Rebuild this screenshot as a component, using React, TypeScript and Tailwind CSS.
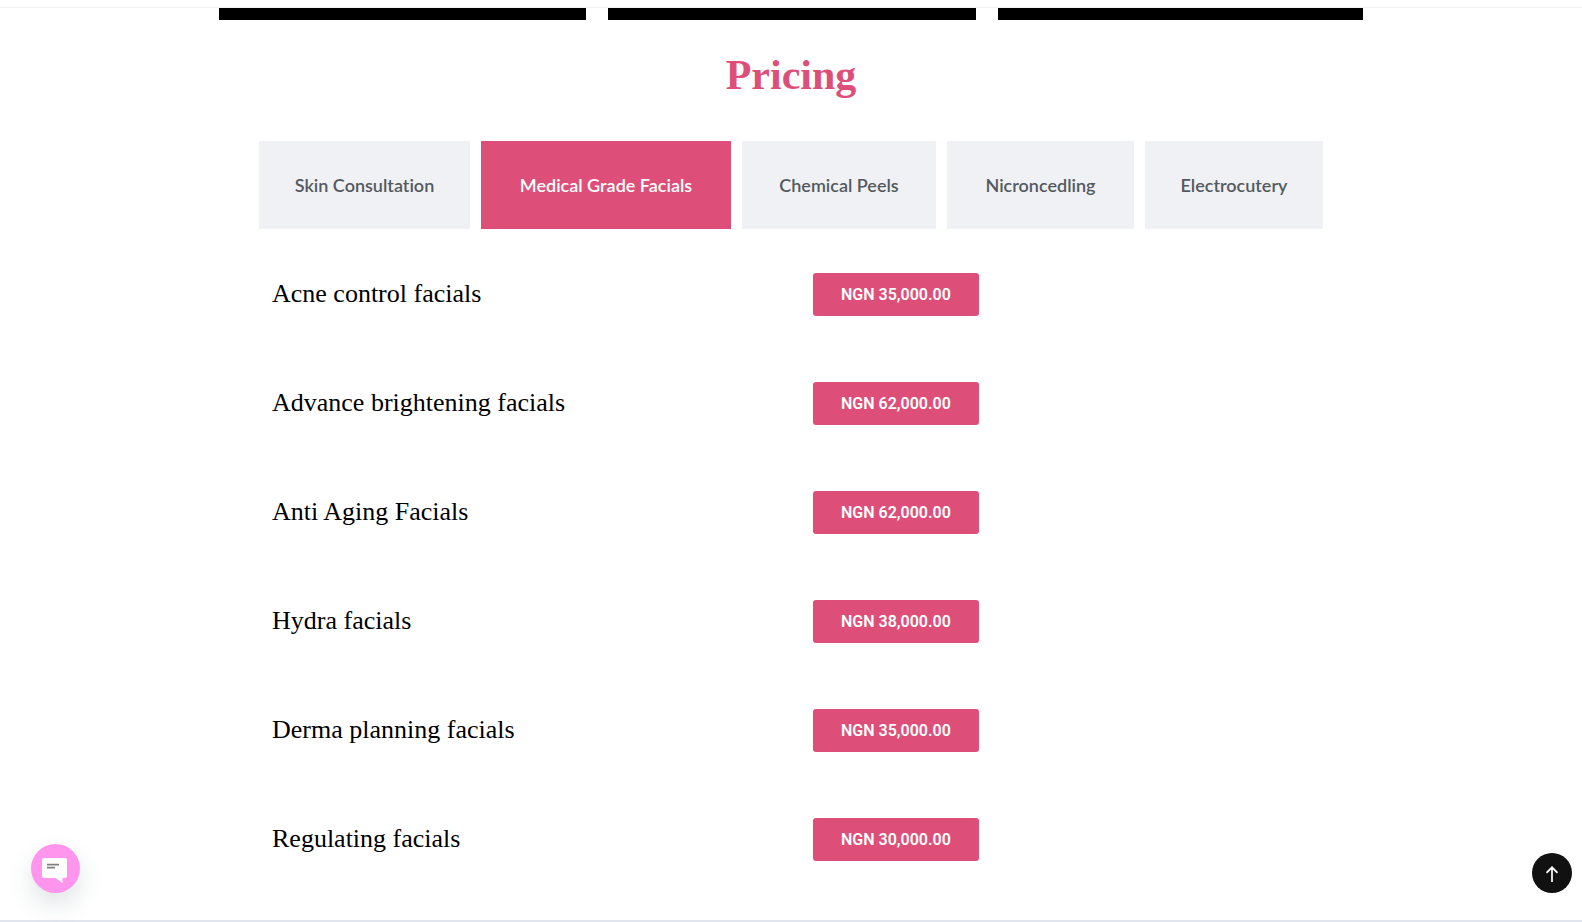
import { useState } from "react";
import clsx from "clsx";

type Treatment = {
  name: string;
  price: string;
};

const tabs = [
  "Skin Consultation",
  "Medical Grade Facials",
  "Chemical Peels",
  "Nicroncedling",
  "Electrocutery",
];

const treatments: Treatment[] = [
  { name: "Acne control facials", price: "NGN 35,000.00" },
  { name: "Advance brightening facials", price: "NGN 62,000.00" },
  { name: "Anti Aging Facials", price: "NGN 62,000.00" },
  { name: "Hydra facials", price: "NGN 38,000.00" },
  { name: "Derma planning facials", price: "NGN 35,000.00" },
  { name: "Regulating facials", price: "NGN 30,000.00" },
];

function ChatIcon() {
  return (
    <svg viewBox="0 0 25 25" className="size-[25px]" aria-hidden="true">
      <path
        d="M2 0h21A2 2 0 0 1 25 2v16a2 2 0 0 1-2 2H20.500v5L13.500 20H2A2 2 0 0 1 0 18V2A2 2 0 0 1 2 0z"
        fill="#fff"
      />
      <path d="M5 6.700h12M5 9.700h8" stroke="#808080" strokeWidth="1.7" />
    </svg>
  );
}

function ArrowUpIcon() {
  return (
    <svg viewBox="0 0 12 16" className="h-4 w-3" fill="none" stroke="#fff" strokeWidth="1.7" aria-hidden="true">
      <path d="M6 16V1.500M0.500 6.800L6 1.300l5.500 5.500" />
    </svg>
  );
}

export default function App() {
  const [activeTab, setActiveTab] = useState(1);

  return (
    <div className="flex min-h-screen flex-col bg-white">
      <header className="h-2 border-b border-[#f1f1f1]" />

      <main className="mx-auto w-full max-w-[1144px]">
        <div className="grid h-3 grid-cols-[367fr_368fr_365fr] gap-[22px]">
          <div className="bg-black" />
          <div className="bg-black" />
          <div className="bg-black" />
        </div>

        <section className="px-10">
          <h1 className="pt-[31px] text-center font-['Liberation_Serif',serif] text-[42px] leading-[48px] font-bold text-[#dd4f79]">
            Pricing
          </h1>

          <div
            role="tablist"
            className="mt-[42px] grid grid-cols-[211fr_250fr_194fr_187fr_178fr] gap-[11px]"
          >
            {tabs.map((tab, i) => (
              <button
                key={tab}
                type="button"
                role="tab"
                aria-selected={i === activeTab}
                onClick={() => setActiveTab(i)}
                className={clsx(
                  "h-[88px] cursor-pointer font-[Lato,sans-serif] text-lg font-semibold whitespace-nowrap [font-variant-ligatures:none]",
                  i === activeTab ? "bg-[#dd4f79] text-white" : "bg-[#f0f1f4] text-[#54595f]"
                )}
              >
                {tab}
              </button>
            ))}
          </div>

          <ul className="flex flex-col gap-[66px] pt-11 pb-[59px]">
            {treatments.map((item) => (
              <li key={item.name} className="grid grid-cols-2 items-center">
                <h2 className="pb-0.5 pl-[13px] font-['Liberation_Serif',serif] text-[26px] leading-8 text-black">
                  {item.name}
                </h2>
                <div className="flex pl-[22px]">
                  <a
                    href="#book"
                    className="rounded-[3px] bg-[#dd4f79] px-7 font-[Roboto,sans-serif] text-base leading-[43px] font-semibold text-white"
                  >
                    {item.price}
                  </a>
                </div>
              </li>
            ))}
          </ul>
        </section>
      </main>

      <footer className="mt-auto h-[2px] bg-[#e1e6ee]" />

      <button
        type="button"
        aria-label="Open chat"
        className="fixed bottom-[29px] left-[31px] flex size-[49px] cursor-pointer items-center justify-center rounded-full bg-[#ff95ec] pt-1 pr-0.5 shadow-[0_12px_24px_rgba(35,65,80,0.14)]"
      >
        <ChatIcon />
      </button>
      <a
        href="#top"
        aria-label="Back to top"
        className="fixed right-[10px] bottom-[29px] flex size-10 items-center justify-center rounded-full bg-[#111] pt-0.5"
      >
        <ArrowUpIcon />
      </a>
    </div>
  );
}
